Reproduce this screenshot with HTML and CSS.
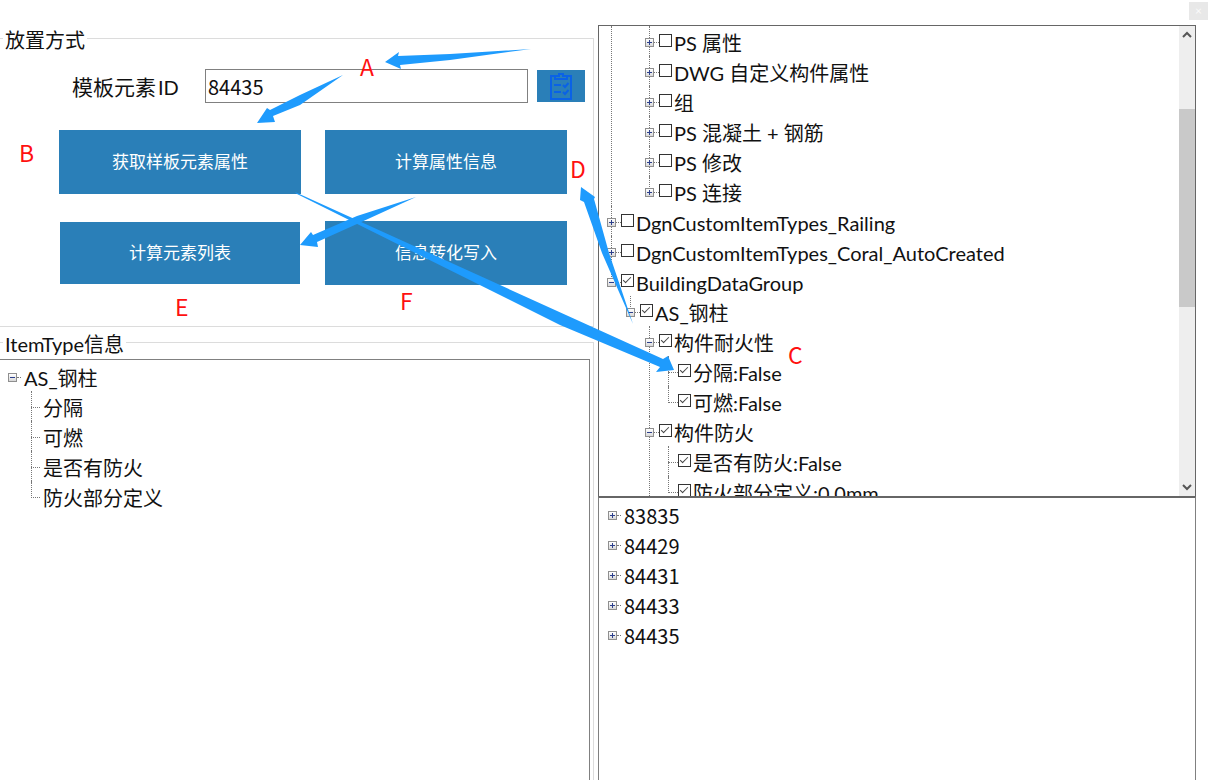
FILE: index.html
```html
<!DOCTYPE html>
<html lang="zh-CN">
<head>
  <meta charset="UTF-8" />
  <title>ItemType</title>
  <link rel="stylesheet" href="styles.css">
</head>
<body>
<div class="window">
  <div class="left">
    <fieldset class="group group-top">
      <legend>放置方式</legend>
      <div class="id-row">
        <label class="id-label" for="elementId">模板元素<span class="id-text">ID</span></label>
        <input class="id-input" id="elementId" type="text" value="84435" />
        <button class="icon-button" aria-label="选择">
          <svg width="24" height="28" viewBox="0 0 24 28" fill="none" stroke="#0a62e6" stroke-width="2">
            <path d="M6 4H2v23h20V4h-4" />
            <path d="M6 7V4h4V2h4v2h4v3z" />
            <path d="M5 13h7M5 20h7" />
            <path d="M14 13l2 2 3.500-4M14 20l2 2 3.500-4" />
          </svg>
        </button>
      </div>
      <div class="actions">
        <button class="action">获取样板元素属性</button>
        <button class="action">计算属性信息</button>
        <button class="action inset">计算元素列表</button>
        <button class="action">信息转化写入</button>
      </div>
    </fieldset>

    <fieldset class="group group-info">
      <legend>ItemType信息</legend>
      <div class="tree-box info-box">
        <ul class="tree">
          <li class="noguide">
            <div class="row"><i class="exp minus"></i><i class="dots"></i><span class="txt gap">AS_钢柱</span></div>
            <ul>
              <li><div class="row"><i class="tick"></i><span class="txt gap">分隔</span></div></li>
              <li><div class="row"><i class="tick"></i><span class="txt gap">可燃</span></div></li>
              <li><div class="row"><i class="tick"></i><span class="txt gap">是否有防火</span></div></li>
              <li><div class="row"><i class="tick"></i><span class="txt gap">防火部分定义</span></div></li>
            </ul>
          </li>
        </ul>
      </div>
    </fieldset>
  </div>

  <div class="right">
    <div class="tree-box props-box">
      <div class="tree-scroll">
        <ul class="tree">
          <li>
            <ul>
              <li class="noguide">
                <ul>
                  <li><div class="row"><i class="exp plus"></i><i class="dots"></i><i class="cb"></i><span class="txt">PS 属性</span></div></li>
                  <li><div class="row"><i class="exp plus"></i><i class="dots"></i><i class="cb"></i><span class="txt">DWG 自定义构件属性</span></div></li>
                  <li><div class="row"><i class="exp plus"></i><i class="dots"></i><i class="cb"></i><span class="txt">组</span></div></li>
                  <li><div class="row"><i class="exp plus"></i><i class="dots"></i><i class="cb"></i><span class="txt">PS 混凝土 + 钢筋</span></div></li>
                  <li><div class="row"><i class="exp plus"></i><i class="dots"></i><i class="cb"></i><span class="txt">PS 修改</span></div></li>
                  <li><div class="row"><i class="exp plus"></i><i class="dots"></i><i class="cb"></i><span class="txt">PS 连接</span></div></li>
                </ul>
              </li>
            </ul>
          </li>
          <li><div class="row"><i class="exp plus"></i><i class="dots"></i><i class="cb"></i><span class="txt">DgnCustomItemTypes_Railing</span></div></li>
          <li><div class="row"><i class="exp plus"></i><i class="dots"></i><i class="cb"></i><span class="txt">DgnCustomItemTypes_Coral_AutoCreated</span></div></li>
          <li>
            <div class="row"><i class="exp minus"></i><i class="dots"></i><i class="cb on"></i><span class="txt">BuildingDataGroup</span></div>
            <ul>
              <li>
                <div class="row"><i class="exp minus"></i><i class="dots"></i><i class="cb on"></i><span class="txt">AS_钢柱</span></div>
                <ul>
                  <li>
                    <div class="row"><i class="exp minus"></i><i class="dots"></i><i class="cb on"></i><span class="txt">构件耐火性</span></div>
                    <ul>
                      <li><div class="row"><i class="tick"></i><i class="cb on"></i><span class="txt">分隔:False</span></div></li>
                      <li><div class="row"><i class="tick"></i><i class="cb on"></i><span class="txt">可燃:False</span></div></li>
                    </ul>
                  </li>
                  <li class="more">
                    <div class="row"><i class="exp minus"></i><i class="dots"></i><i class="cb on"></i><span class="txt">构件防火</span></div>
                    <ul>
                      <li><div class="row"><i class="tick"></i><i class="cb on"></i><span class="txt">是否有防火:False</span></div></li>
                      <li><div class="row"><i class="tick"></i><i class="cb on"></i><span class="txt">防火部分定义:0.0mm</span></div></li>
                    </ul>
                  </li>
                  <li></li>
                </ul>
              </li>
            </ul>
          </li>
        </ul>
      </div>
      <div class="scrollbar">
        <svg class="chevron" width="10" height="7" viewBox="0 0 10 7"><path d="M1 6l4-4 4 4" fill="none" stroke="#555" stroke-width="2" /></svg>
        <div class="track"><div class="thumb"></div></div>
        <svg class="chevron" width="10" height="7" viewBox="0 0 10 7"><path d="M1 1l4 4 4-4" fill="none" stroke="#555" stroke-width="2" /></svg>
      </div>
    </div>

    <div class="tree-box list-box">
      <ul class="tree flat">
        <li><div class="row"><i class="exp plus"></i><i class="dots"></i><span class="txt gap">83835</span></div></li>
        <li><div class="row"><i class="exp plus"></i><i class="dots"></i><span class="txt gap">84429</span></div></li>
        <li><div class="row"><i class="exp plus"></i><i class="dots"></i><span class="txt gap">84431</span></div></li>
        <li><div class="row"><i class="exp plus"></i><i class="dots"></i><span class="txt gap">84433</span></div></li>
        <li><div class="row"><i class="exp plus"></i><i class="dots"></i><span class="txt gap">84435</span></div></li>
      </ul>
    </div>
  </div>

  <div class="close">×</div>

  <!-- annotations drawn on top of the screenshot -->
  <svg class="arrows" width="1209" height="780" viewBox="0 0 1209 780">
    <polygon points="531,49 450,54 398,56 399,52 385,62 401,69 400,65 450,60" />
    <polygon points="343,75 300,95 270,110 267,108 257,123 275,122 273,116 300,105" />
    <polygon points="416,197 357,216 313,235 311,232 300,245 318,247 317,242 357,224" />
    <polygon points="633,324 609,253 594,199 595,197 581,187 580,200 584,202 602,253" />
    <polygon points="295,192 663,359 668,356 674,370 656,372 660,367 560,325 297,194" />
  </svg>
  <span class="mark mark-a">A</span>
  <span class="mark mark-b">B</span>
  <span class="mark mark-c">C</span>
  <span class="mark mark-d">D</span>
  <span class="mark mark-e">E</span>
  <span class="mark mark-f">F</span>
</div>
</body>
</html>
```

FILE: styles.css
```css
:root {
  --blue: #2a7fb8;
  --frame: #808080;
  --group: #dcdcdc;
  --arrow: #1e9bfd;
}

html, body {
  margin: 0;
  height: 100%;
  overflow: hidden;
  background: #fff;
}

body {
  font-family: Lato, "Noto Sans CJK SC", sans-serif;
  font-size: 20px;
  color: #111;
}

.window {
  position: relative;
  display: flex;
  gap: 4px;
  width: 1209px;
  height: 780px;
  overflow: hidden;
}

/* left column */
.left {
  display: flex;
  flex-direction: column;
  width: 594px;
  padding-top: 24px;
  box-sizing: border-box;
}

.group {
  min-width: 0;
  margin: 0;
  padding: 0;
  border: 1px solid var(--group);
  border-left: none;
}

.group legend {
  margin-left: 3px;
  padding: 4px 2px 0;
  line-height: 24px;
}

.group-top {
  height: 303px;
  box-sizing: border-box;
}

.group-info {
  flex: 1;
  margin-top: 1px;
  padding-right: 3px;
  border-bottom: none;
  min-height: 0;
}

.id-row {
  display: flex;
  align-items: center;
  margin-top: 17px;
  padding-left: 72px;
  height: 34px;
}

.id-label {
  width: 133px;
  font-size: 21px;
}

.id-text {
  margin-left: 2px;
  font-size: 20px;
}

.id-input {
  width: 323px;
  height: 34px;
  padding: 0 2px;
  box-sizing: border-box;
  border: 1px solid var(--frame);
  font-family: "Noto Sans CJK SC", sans-serif;
  font-size: 20px;
  color: inherit;
  outline: none;
}

.icon-button {
  display: flex;
  align-items: center;
  justify-content: center;
  width: 48px;
  height: 32px;
  margin-left: 9px;
  padding: 0;
  border: none;
  background: var(--blue);
}

.actions {
  display: grid;
  grid-template-columns: 242px 242px;
  grid-template-rows: 64px 64px;
  column-gap: 24px;
  row-gap: 27px;
  margin: 27px 0 0 59px;
}

.action {
  padding: 0 0 3px;
  border: none;
  background: var(--blue);
  color: #fff;
  font: inherit;
  font-size: 17px;
}

.inset {
  margin: 1px;
}

/* trees */
.tree-box {
  box-sizing: border-box;
  border: 1px solid var(--frame);
  background: #fff;
  overflow: hidden;
}

.info-box {
  height: 440px;
  margin-top: 3px;
  border-left: none;
  border-bottom: none;
}

.tree, .tree ul {
  list-style: none;
  margin: 0;
  padding: 0;
}

.tree {
  padding-left: 8px;
  padding-top: 3px;
}

.tree ul {
  padding-left: 19px;
}

.tree li {
  position: relative;
}

.tree li::before {
  content: "";
  position: absolute;
  left: 4px;
  top: -2px;
  bottom: 0;
  border-left: 1px dotted #777;
}

.tree li:last-child::before {
  bottom: auto;
  height: 17px;
}

.tree li.noguide::before,
.flat li::before {
  display: none;
}

.row {
  position: relative;
  display: flex;
  align-items: flex-start;
  height: 30px;
  line-height: 30px;
  white-space: nowrap;
}

.exp {
  position: relative;
  flex: none;
  width: 9px;
  height: 9px;
  margin-top: 10px;
  box-sizing: border-box;
  border: 1px solid #8f8f8f;
  background: linear-gradient(#fff, #d8d8d8);
}

.exp::before {
  content: "";
  position: absolute;
  left: 1px;
  top: 3px;
  width: 5px;
  height: 1px;
  background: #2b3f8c;
}

.plus::after {
  content: "";
  position: absolute;
  left: 3px;
  top: 1px;
  width: 1px;
  height: 5px;
  background: #2b3f8c;
}

.dots {
  flex: none;
  width: 4px;
  margin-top: 14px;
  border-top: 1px dotted #777;
}

.tick {
  flex: none;
  width: 9px;
  margin: 14px 0 0 4px;
  border-top: 1px dotted #777;
}

.cb {
  position: relative;
  flex: none;
  width: 13px;
  height: 13px;
  margin: 6px 2px 0 0;
  box-sizing: border-box;
  border: 1px solid #333;
  background: #fff;
}

.cb.on::after {
  content: "";
  position: absolute;
  left: 1px;
  top: 2px;
  width: 7px;
  height: 3px;
  border: solid #444;
  border-width: 0 0 1.500px 1.500px;
  transform: rotate(-45deg);
}

.gap {
  margin-left: 3px;
}

/* right column */
.right {
  display: flex;
  flex-direction: column;
  width: 598px;
  margin-top: 25px;
  box-sizing: border-box;
}

.props-box {
  display: flex;
  height: 471px;
  border-bottom: none;
  border-color: #666;
}

.tree-scroll {
  flex: 1;
  min-width: 0;
  overflow: hidden;
}

.tree-scroll .tree {
  padding-top: 2px;
}

.tree-scroll .dots {
  width: 5px;
}

.tree-scroll .tick {
  width: 10px;
}

.scrollbar {
  display: flex;
  flex-direction: column;
  align-items: center;
  flex: none;
  width: 16px;
  background: #eee;
  padding: 5px 0;
  box-sizing: border-box;
}

.chevron {
  flex: none;
}

.track {
  flex: 1;
  align-self: stretch;
  margin: 0;
}

.thumb {
  height: 198px;
  margin-top: 71px;
  background: #c9c9c9;
}

.list-box {
  flex: 1;
  border-top: 2px solid #666;
  border-bottom: none;
  font-family: "Noto Sans CJK SC", sans-serif;
}

.list-box .tree {
  padding-left: 9px;
}

/* overlays */
.close {
  position: absolute;
  top: 2px;
  right: 1px;
  width: 19px;
  height: 18px;
  background: #e8e8e8;
  color: #fafafa;
  font-size: 12px;
  line-height: 18px;
  text-align: center;
}

.arrows {
  position: absolute;
  top: 0;
  left: 0;
  pointer-events: none;
}

.arrows polygon {
  fill: var(--arrow);
}

.mark {
  position: absolute;
  color: #ff1010;
  font-family: "Noto Sans CJK SC", sans-serif;
  font-size: 23px;
  line-height: 24px;
}

.mark-a { left: 360px; top: 54px; }
.mark-b { left: 19px; top: 140px; }
.mark-c { left: 788px; top: 342px; }
.mark-d { left: 570px; top: 156px; }
.mark-e { left: 175px; top: 294px; }
.mark-f { left: 400px; top: 288px; }
```
